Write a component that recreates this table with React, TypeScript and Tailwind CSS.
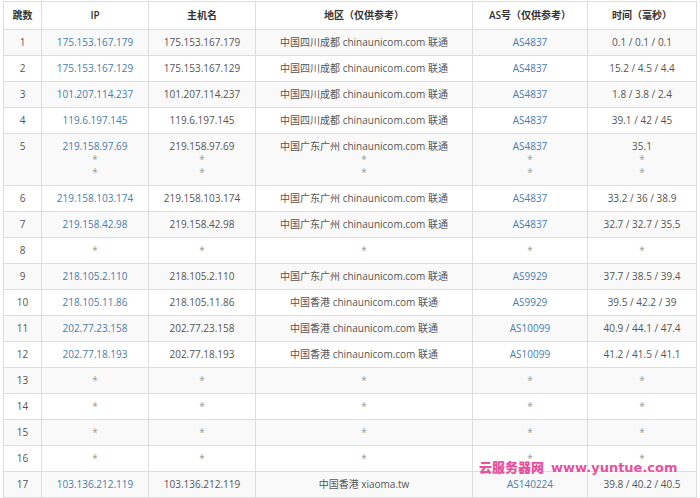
type Hop = {
  n: number;
  ip: string[];
  region: string;
  as: string[];
  time: string[];
};

const SC = "中国四川成都 chinaunicom.com 联通";
const GZ = "中国广东广州 chinaunicom.com 联通";
const HK = "中国香港 chinaunicom.com 联通";

const star = (n: number): Hop => ({ n, ip: ["*"], region: "*", as: ["*"], time: ["*"] });

const hops: Hop[] = [
  { n: 1, ip: ["175.153.167.179"], region: SC, as: ["AS4837"], time: ["0.1 / 0.1 / 0.1"] },
  { n: 2, ip: ["175.153.167.129"], region: SC, as: ["AS4837"], time: ["15.2 / 4.5 / 4.4"] },
  { n: 3, ip: ["101.207.114.237"], region: SC, as: ["AS4837"], time: ["1.8 / 3.8 / 2.4"] },
  { n: 4, ip: ["119.6.197.145"], region: SC, as: ["AS4837"], time: ["39.1 / 42 / 45"] },
  { n: 5, ip: ["219.158.97.69", "*", "*"], region: GZ, as: ["AS4837", "*", "*"], time: ["35.1", "*", "*"] },
  { n: 6, ip: ["219.158.103.174"], region: GZ, as: ["AS4837"], time: ["33.2 / 36 / 38.9"] },
  { n: 7, ip: ["219.158.42.98"], region: GZ, as: ["AS4837"], time: ["32.7 / 32.7 / 35.5"] },
  star(8),
  { n: 9, ip: ["218.105.2.110"], region: GZ, as: ["AS9929"], time: ["37.7 / 38.5 / 39.4"] },
  { n: 10, ip: ["218.105.11.86"], region: HK, as: ["AS9929"], time: ["39.5 / 42.2 / 39"] },
  { n: 11, ip: ["202.77.23.158"], region: HK, as: ["AS10099"], time: ["40.9 / 44.1 / 47.4"] },
  { n: 12, ip: ["202.77.18.193"], region: HK, as: ["AS10099"], time: ["41.2 / 41.5 / 41.1"] },
  star(13),
  star(14),
  star(15),
  star(16),
  { n: 17, ip: ["103.136.212.119"], region: "中国香港 xiaoma.tw", as: ["AS140224"], time: ["39.8 / 40.2 / 40.5"] },
];

function Lines({ items, link }: { items: string[]; link?: boolean }) {
  return (
    <>
      {items.map((t, i) => (
        <div key={i} className={t === "*" ? "text-[#999]" : link ? "text-[#4a7cad]" : ""}>
          {t}
        </div>
      ))}
    </>
  );
}

const td = "border border-[#dddddd] px-1 py-[6px] leading-[13px] text-center align-top whitespace-nowrap";
const th = "border border-[#dddddd] px-1 py-[7px] leading-[13px] text-center font-semibold text-[#333]";

export default function App() {
  return (
    <div
      className="relative w-[700px] h-[498px] overflow-hidden bg-white pl-[3px] pt-[1px] text-[10px] text-[#555]"
      style={{ fontFamily: '"Open Sans", "Noto Sans CJK SC", sans-serif' }}
    >
      <table className="w-[693px] table-fixed border-collapse">
        <colgroup>
          <col className="w-[38px]" />
          <col className="w-[107px]" />
          <col className="w-[107px]" />
          <col className="w-[217px]" />
          <col className="w-[115px]" />
          <col className="w-[109px]" />
        </colgroup>
        <thead>
          <tr className="bg-white">
            <th className={th}>跳数</th>
            <th className={th}>IP</th>
            <th className={th}>主机名</th>
            <th className={th}>地区（仅供参考）</th>
            <th className={th}>AS号（仅供参考）</th>
            <th className={th}>时间（毫秒）</th>
          </tr>
        </thead>
        <tbody>
          {hops.map((h) => (
            <tr key={h.n} className={h.n % 2 === 1 ? "bg-[#f9f9f9]" : "bg-white"}>
              <td className={td}>{h.n}</td>
              <td className={td}>
                <Lines items={h.ip} link />
              </td>
              <td className={td}>
                <Lines items={h.ip} />
              </td>
              <td className={td}>
                <Lines items={h.ip.length > 1 ? [h.region, "*", "*"] : [h.region]} />
              </td>
              <td className={td}>
                <Lines items={h.as} link />
              </td>
              <td className={td}>
                <Lines items={h.time} />
              </td>
            </tr>
          ))}
        </tbody>
      </table>

      {/* watermark */}
      <div
        className="absolute left-[479px] top-[460px] flex items-baseline gap-[7px] whitespace-nowrap font-bold text-[#e8509e] leading-none"
        style={{ fontFamily: '"DejaVu Sans", "Noto Sans CJK SC", sans-serif' }}
      >
        <span className="text-[13px]" style={{ fontFamily: '"Noto Sans CJK SC", sans-serif', fontWeight: 900 }}>
          云服务器网
        </span>
        <span className="text-[13px]">www.yuntue.com</span>
      </div>
    </div>
  );
}
